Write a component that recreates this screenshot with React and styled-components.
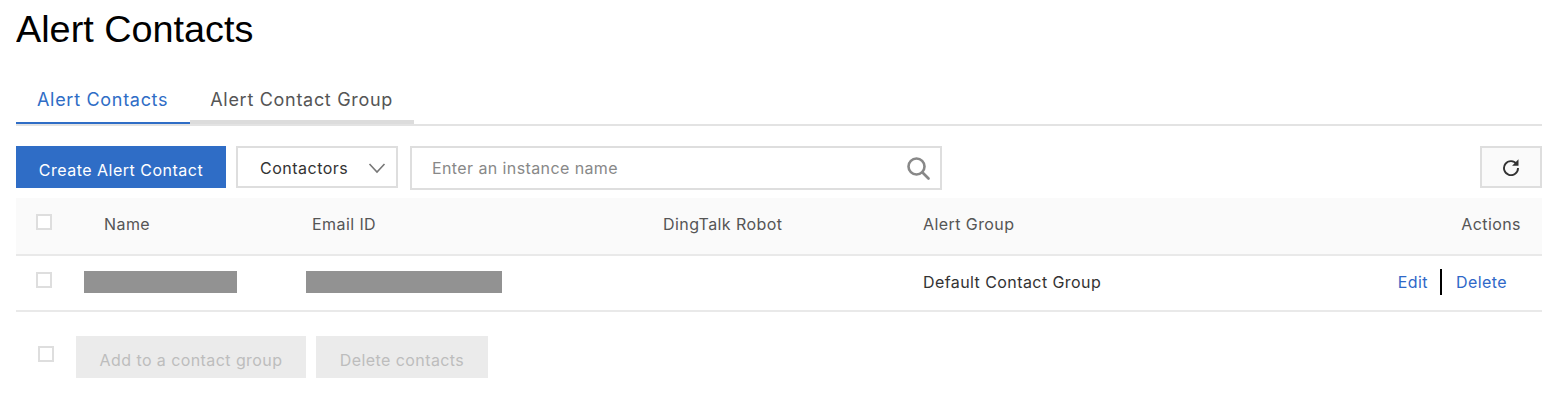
import React from 'react';
import styled, { createGlobalStyle } from 'styled-components';

const Global = createGlobalStyle`
  html, body { margin: 0; padding: 0; background: #fff; }
  body { font-family: Inter, "Liberation Sans", sans-serif; font-size: 16px; }
`;
const Page = styled.div`
  width: 1526px; margin-left: 16px; height: 402px; overflow: hidden;
`;
const Title = styled.h1`
  margin: 0; height: 76px; padding-top: 8px; box-sizing: border-box;
  font: 400 37.8px/43px "Liberation Sans", sans-serif; color: #000;
`;
const Tabs = styled.div`
  display: flex; height: 48px; border-bottom: 2px solid #e3e3e3;
`;
const Tab = styled.div`
  height: 46px; line-height: 48px; padding: 0 22px 0 21px;
  font-size: 18px; letter-spacing: 0.7px;
  color: ${p => (p.$active ? '#2f6dc6' : '#555')};
  border-bottom: 2px solid ${p => (p.$active ? '#2f6dc6' : '#dcdcdc')};
  margin-bottom: -2px;
  &:last-child { border-bottom-width: 4px; height: 44px; padding: 0 21px 0 20px; }
`;
const Toolbar = styled.div`
  display: flex; align-items: flex-start; margin-top: 20px; height: 52px;
`;
const Primary = styled.button`
  width: 210px; height: 42px; border: 0; background: #2f6dc6; color: #fff; padding: 5px 0 0;
  font: 400 16px Inter, sans-serif; letter-spacing: 0.5px;
`;
const Select = styled.div`
  width: 162px; height: 42px; margin-left: 10px; box-sizing: border-box; border: 2px solid #dedede;
  display: flex; align-items: center; justify-content: space-between; padding: 2px 10px 0 22px;
  color: #333; font-size: 16px; letter-spacing: 0.5px;
`;
const Search = styled.div`
  width: 532px; height: 44px; margin-left: 12px; box-sizing: border-box; border: 2px solid #dedede;
  display: flex; align-items: center; justify-content: space-between; padding: 0 10px 0 20px;
  color: #888; font-size: 16px; letter-spacing: 0.4px;
`;
const Refresh = styled.button`
  width: 62px; height: 42px; margin-left: auto; box-sizing: border-box; border: 2px solid #dedede;
  background: #fafafa; display: flex; align-items: center; justify-content: center; padding: 0;
`;
const Row = styled.div`
  display: grid; grid-template-columns: 68px 228px 351px 260px 1fr; align-items: center;
  height: ${p => p.$h}px; padding-bottom: ${p => p.$pb}px; background: ${p => p.$bg || '#fff'};
  border-bottom: 2px solid #e9e9e9; color: ${p => p.$color}; font-size: 16px; letter-spacing: 0.42px;
`;
const CheckCell = styled.div`
  padding-left: 20px; display: flex; margin-top: -${p => p.$up}px;
`;
const Check = styled.span`
  display: block; width: 16px; height: 16px; box-sizing: border-box; border: 2px solid #dedede; background: #fff;
`;
const Cell = styled.div`
  padding-left: ${p => p.$pad || 0}px;
`;
const Split = styled.div`
  display: flex; justify-content: space-between; align-items: center; padding-right: 21px;
`;
const Mask = styled.div`
  height: 22px; width: ${p => p.$w}px; background: #929292; margin-left: ${p => p.$ml}px;
`;
const Actions = styled.div`
  display: flex; align-items: center; padding-right: 14px; color: #2f68c8;
`;
const Divider = styled.span`
  width: 2px; height: 26px; background: #000; margin: 0 14px 0 12px;
`;
const Footer = styled.div`
  display: flex; align-items: flex-start; margin-top: 24px;
`;
const FootCheck = styled.div`
  width: 60px; padding: 10px 0 0 22px; box-sizing: border-box;
`;
const Ghost = styled.button`
  height: 42px; width: ${p => p.$w}px; border: 0; background: #ebebeb; color: #bdbdbd; padding: 6px 0 0; margin-right: 10px;
  font: 400 16px Inter, sans-serif; letter-spacing: 0.42px;
`;

export default function App() {
  return (
    <>
      <Global />
      <Page>
        <Title>Alert Contacts</Title>
        <Tabs>
          <Tab $active>Alert Contacts</Tab>
          <Tab>Alert Contact Group</Tab>
        </Tabs>
        <Toolbar>
          <Primary>Create Alert Contact</Primary>
          <Select>
            Contactors
            <svg width="18" height="18" viewBox="0 0 18 18" fill="none" stroke="#777" strokeWidth="1.6"><path d="M1.5 5l7.5 8 7.5-8" /></svg>
          </Select>
          <Search>
            Enter an instance name
            <svg width="24" height="24" viewBox="0 0 24 24" fill="none" stroke="#888" strokeWidth="2.6"><circle cx="10.5" cy="10.5" r="8" /><path d="M16.5 16.5l6 6" strokeLinecap="round" /></svg>
          </Search>
          <Refresh>
            <svg width="18" height="18" viewBox="0 0 18 18" fill="none"><path d="M14.8 6.2A7 7 0 1 0 16 10" stroke="#333" strokeWidth="1.9" /><path d="M16.5 1.2v6.6h-6.4z" fill="#333" /></svg>
          </Refresh>
        </Toolbar>
        <Row $h={52} $pb={4} $bg="#fafafa" $color="#555">
          <CheckCell $up={5}><Check /></CheckCell>
          <Cell $pad={20}>Name</Cell>
          <Cell>Email ID</Cell>
          <Cell>DingTalk Robot</Cell>
          <Split><span>Alert Group</span><span>Actions</span></Split>
        </Row>
        <Row $h={52} $pb={2} $color="#333">
          <CheckCell $up={5}><Check /></CheckCell>
          <Mask $w={153} $ml={0} />
          <Mask $w={196} $ml={-6} />
          <div />
          <Split>
            <span>Default Contact Group</span>
            <Actions>Edit<Divider />Delete</Actions>
          </Split>
        </Row>
        <Footer>
          <FootCheck><Check /></FootCheck>
          <Ghost $w={230}>Add to a contact group</Ghost>
          <Ghost $w={172}>Delete contacts</Ghost>
        </Footer>
      </Page>
    </>
  );
}
